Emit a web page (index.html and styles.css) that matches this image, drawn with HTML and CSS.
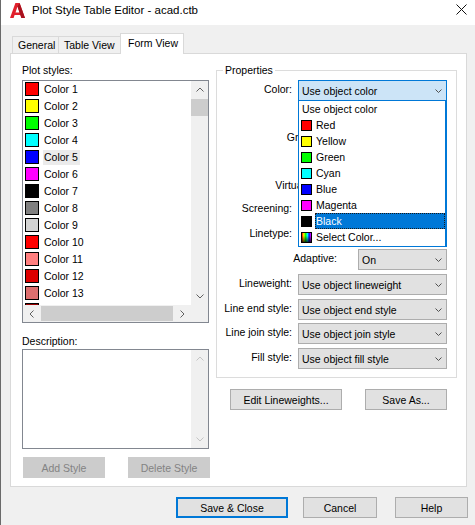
FILE: index.html
```html
<!DOCTYPE html>
<html>
<head>
<meta charset="utf-8">
<title>Plot Style Table Editor - acad.ctb</title>
<link rel="stylesheet" href="styles.css">
</head>
<body>
<div class="window">
  <div class="titlebar">
    <svg class="logo" width="15" height="15" viewBox="0 0 15 15">
      <path d="M0 15 L5.4 0 H9.6 L15 15 H11.4 L10.4 12 H4.6 L3.6 15 Z M5.5 9.4 H9.5 L7.5 3.6 Z" fill="#e1202c" fill-rule="evenodd"/>
      <path d="M9.6 0 L15 15 H11.4 L7.5 3.6 Z" fill="#a8121e"/>
    </svg>
    <span class="title">Plot Style Table Editor - acad.ctb</span>
    <svg class="close" width="11" height="11" viewBox="0 0 11 11">
      <path d="M0.5 0.5 L10.5 10.5 M10.5 0.5 L0.5 10.5" stroke="#111" stroke-width="1"/>
    </svg>
  </div>

  <div class="tabs">
    <div class="tab tab-general">General</div>
    <div class="tab tab-table">Table View</div>
    <div class="tab tab-form active">Form View</div>
  </div>

  <div class="panel">
    <div class="left">
      <div class="label">Plot styles:</div>
      <div class="listbox">
        <div class="items">
          <div class="item"><span class="sw" style="background:#ff0000"></span><span class="txt">Color 1</span></div>
          <div class="item"><span class="sw" style="background:#ffff00"></span><span class="txt">Color 2</span></div>
          <div class="item"><span class="sw" style="background:#00ff00"></span><span class="txt">Color 3</span></div>
          <div class="item"><span class="sw" style="background:#00ffff"></span><span class="txt">Color 4</span></div>
          <div class="item"><span class="sw" style="background:#0000ff"></span><span class="txt sel">Color 5</span></div>
          <div class="item"><span class="sw" style="background:#ff00ff"></span><span class="txt">Color 6</span></div>
          <div class="item"><span class="sw" style="background:#000000"></span><span class="txt">Color 7</span></div>
          <div class="item"><span class="sw" style="background:#808080"></span><span class="txt">Color 8</span></div>
          <div class="item"><span class="sw" style="background:#d3d3d3"></span><span class="txt">Color 9</span></div>
          <div class="item"><span class="sw" style="background:#ff0000"></span><span class="txt">Color 10</span></div>
          <div class="item"><span class="sw" style="background:#ff7f7f"></span><span class="txt">Color 11</span></div>
          <div class="item"><span class="sw" style="background:#dd0000"></span><span class="txt">Color 12</span></div>
          <div class="item"><span class="sw" style="background:#dd6f6f"></span><span class="txt">Color 13</span></div>
          <div class="item"><span class="sw" style="background:#990000"></span><span class="txt">Color 14</span></div>
        </div>
        <div class="vscroll">
          <div class="sbtn"><svg width="8" height="5" viewBox="0 0 8 5"><path d="M0.5 4.5 L4 1 L7.5 4.5" stroke="#606060" fill="none"/></svg></div>
          <div class="vthumb"></div>
          <div class="spacer"></div>
          <div class="sbtn"><svg width="8" height="5" viewBox="0 0 8 5"><path d="M0.5 0.5 L4 4 L7.5 0.5" stroke="#606060" fill="none"/></svg></div>
        </div>
        <div class="hscroll">
          <div class="sbtn"><svg width="5" height="8" viewBox="0 0 5 8"><path d="M4.5 0.5 L1 4 L4.5 7.5" stroke="#606060" fill="none"/></svg></div>
          <div class="htrack"><div class="hthumb"></div></div>
          <div class="sbtn"><svg width="5" height="8" viewBox="0 0 5 8"><path d="M0.5 0.5 L4 4 L0.5 7.5" stroke="#606060" fill="none"/></svg></div>
        </div>
        <div class="corner"></div>
      </div>

      <div class="label desc-label">Description:</div>
      <div class="textarea">
        <div class="tvscroll">
          <div class="sbtn"><svg width="8" height="5" viewBox="0 0 8 5"><path d="M0.5 4.5 L4 1 L7.5 4.5" stroke="#c4c4c4" fill="none"/></svg></div>
          <div class="spacer"></div>
          <div class="sbtn"><svg width="8" height="5" viewBox="0 0 8 5"><path d="M0.5 0.5 L4 4 L7.5 0.5" stroke="#c4c4c4" fill="none"/></svg></div>
        </div>
      </div>
      <div class="btnrow">
        <div class="btn disabled">Add Style</div>
        <div class="btn disabled">Delete Style</div>
      </div>
    </div>

    <div class="right">
      <fieldset class="props">
        <legend>Properties</legend>
        <div class="rows">
          <div class="row wide">
            <span class="plabel">Color:</span>
            <div class="combo-wrap">
              <div class="combo focus"><span>Use object color</span><svg class="chev" width="7" height="4" viewBox="0 0 7 4"><path d="M0.5 0.5 L3.5 3.5 L6.5 0.5" stroke="#505050" fill="none"/></svg></div>
              <div class="droplist">
                <div class="ditem"><span class="dtxt">Use object color</span></div>
                <div class="ditem"><span class="dsw" style="background:#ff0000"></span><span class="dtxt">Red</span></div>
                <div class="ditem"><span class="dsw" style="background:#ffff00"></span><span class="dtxt">Yellow</span></div>
                <div class="ditem"><span class="dsw" style="background:#00ff00"></span><span class="dtxt">Green</span></div>
                <div class="ditem"><span class="dsw" style="background:#00ffff"></span><span class="dtxt">Cyan</span></div>
                <div class="ditem"><span class="dsw" style="background:#0000ff"></span><span class="dtxt">Blue</span></div>
                <div class="ditem"><span class="dsw" style="background:#ff00ff"></span><span class="dtxt">Magenta</span></div>
                <div class="ditem"><span class="dsw" style="background:#000000"></span><span class="dtxt hl">Black</span></div>
                <div class="ditem"><span class="dsw rainbow"></span><span class="dtxt">Select Color...</span></div>
              </div>
            </div>
          </div>
          <div class="row hidden-row"></div>
          <div class="row narrow">
            <span class="plabel-clip"><span class="plabel">Grayscale:</span></span>
            <div class="combo"></div>
          </div>
          <div class="row hidden-row"></div>
          <div class="row narrow">
            <span class="plabel-clip"><span class="plabel">Virtual pen #:</span></span>
            <div class="combo"></div>
          </div>
          <div class="row wide">
            <span class="plabel">Screening:</span>
            <div class="combo"></div>
          </div>
          <div class="row wide">
            <span class="plabel">Linetype:</span>
            <div class="combo"></div>
          </div>
          <div class="row narrow">
            <span class="plabel">Adaptive:</span>
            <div class="combo"><span>On</span><svg class="chev" width="7" height="4" viewBox="0 0 7 4"><path d="M0.5 0.5 L3.5 3.5 L6.5 0.5" stroke="#505050" fill="none"/></svg></div>
          </div>
          <div class="row wide">
            <span class="plabel">Lineweight:</span>
            <div class="combo"><span>Use object lineweight</span><svg class="chev" width="7" height="4" viewBox="0 0 7 4"><path d="M0.5 0.5 L3.5 3.5 L6.5 0.5" stroke="#505050" fill="none"/></svg></div>
          </div>
          <div class="row wide">
            <span class="plabel">Line end style:</span>
            <div class="combo"><span>Use object end style</span><svg class="chev" width="7" height="4" viewBox="0 0 7 4"><path d="M0.5 0.5 L3.5 3.5 L6.5 0.5" stroke="#505050" fill="none"/></svg></div>
          </div>
          <div class="row wide">
            <span class="plabel">Line join style:</span>
            <div class="combo"><span>Use object join style</span><svg class="chev" width="7" height="4" viewBox="0 0 7 4"><path d="M0.5 0.5 L3.5 3.5 L6.5 0.5" stroke="#505050" fill="none"/></svg></div>
          </div>
          <div class="row wide">
            <span class="plabel">Fill style:</span>
            <div class="combo"><span>Use object fill style</span><svg class="chev" width="7" height="4" viewBox="0 0 7 4"><path d="M0.5 0.5 L3.5 3.5 L6.5 0.5" stroke="#505050" fill="none"/></svg></div>
          </div>
        </div>
      </fieldset>
      <div class="actions">
        <div class="btn btn-edit">Edit Lineweights...</div>
        <div class="btn btn-saveas">Save As...</div>
      </div>
    </div>
  </div>

  <div class="footer">
    <div class="btn btn-save default">Save &amp; Close</div>
    <div class="btn btn-cancel">Cancel</div>
    <div class="btn btn-help">Help</div>
  </div>
</div>
</body>
</html>
```

FILE: styles.css
```css
* { box-sizing: border-box; }
html, body { margin: 0; padding: 0; }
body {
  width: 475px;
  height: 525px;
  overflow: hidden;
  background: #f0f0f0;
  font-family: "Liberation Sans", Arial, sans-serif;
  font-size: 10.5px;
  color: #000;
}
.window {
  width: 475px;
  height: 525px;
  border-left: 1px solid #6a6a6a;
  display: flex;
  flex-direction: column;
}

/* title bar */
.titlebar {
  height: 25px;
  background: #fff;
  display: flex;
  align-items: flex-start;
  flex-shrink: 0;
}
.logo { margin: 3px 0 0 9px; flex-shrink: 0; }
.title { margin: 3px 0 0 7px; font-size: 11.5px; line-height: 14px; }
.close { margin: 4px 8px 0 auto; }

/* tabs */
.tabs {
  display: flex;
  align-items: flex-end;
  margin-top: 8px;
  padding-left: 11px;
  height: 20px;
  flex-shrink: 0;
}
.tab {
  height: 17px;
  border: 1px solid #d9d9d9;
  border-bottom: none;
  background: #f0f0f0;
  line-height: 16px;
  padding-left: 5px;
  white-space: nowrap;
}
.tab + .tab { margin-left: -1px; }
.tab-general { width: 47px; }
.tab-table { width: 63px; padding-left: 5px; }
.tab-form { width: 64px; }
.tab.active {
  height: 21px;
  margin-bottom: -1px;
  background: #fff;
  position: relative;
  z-index: 1;
  padding-left: 7px;
  line-height: 18px;
}

/* panel */
.panel {
  margin-left: 9px;
  width: 457px;
  height: 434px;
  background: #fff;
  border: 1px solid #d9d9d9;
  padding: 9px 0 0 11px;
  display: grid;
  grid-template-columns: 187px 241px;
  column-gap: 7px;
  align-items: start;
  flex-shrink: 0;
}

.label { height: 14px; line-height: 14px; }
.left { display: flex; flex-direction: column; }

.listbox {
  margin-top: 3px;
  height: 243px;
  border: 1px solid #828790;
  display: grid;
  grid-template-columns: 168px 17px;
  grid-template-rows: 224px 17px;
}
.items { overflow: hidden; }
.item {
  height: 17px;
  display: flex;
  align-items: flex-start;
  padding: 1px 0 0 2px;
}
.sw {
  width: 14px;
  height: 14px;
  border: 1px solid #000;
  flex-shrink: 0;
  margin-right: 4px;
}
.txt {
  height: 15px;
  line-height: 14px;
  padding: 0 2px 0 1px;
  white-space: nowrap;
}
.txt.sel { background: #ebebeb; }

.vscroll, .tvscroll {
  display: flex;
  flex-direction: column;
  background: #f0f0f0;
}
.sbtn {
  height: 17px;
  width: 17px;
  display: flex;
  align-items: center;
  justify-content: center;
  flex-shrink: 0;
}
.vthumb { height: 17px; margin-top: 1px; background: #cdcdcd; }
.spacer { flex: 1; }
.hscroll { display: flex; background: #f0f0f0; }
.htrack { flex: 1; padding: 1px; }
.hthumb { width: 132px; height: 15px; background: #cdcdcd; }
.corner { background: #f0f0f0; }

.desc-label { margin-top: 11px; }
.textarea {
  margin-top: 1px;
  height: 100px;
  border: 1px solid #828790;
  display: flex;
  justify-content: flex-end;
}
.tvscroll { width: 17px; }

.btnrow {
  margin-top: 8px;
  width: 188px;
  padding-left: 1px;
  display: flex;
  justify-content: space-between;
}

/* buttons */
.btn {
  height: 21px;
  border: 1px solid #adadad;
  background: #e1e1e1;
  display: flex;
  align-items: center;
  justify-content: center;
  white-space: nowrap;
}
.btnrow .btn { width: 82px; }
.btn.disabled { background: #cccccc; border-color: #cccccc; color: #838383; }

/* properties */
.props {
  margin: 0;
  padding: 3px 9px 8px 0;
  border: 1px solid #dcdcdc;
  min-width: 0;
  width: 241px;
}
.props legend {
  margin-left: 6px;
  padding: 0 2px;
  line-height: 14px;
  height: 14px;
}
.rows {
  display: grid;
  grid-template-rows: 24px 24px 24px 24px 23px 25px 25px 25px 25px 24px 25px 21px;
}
.row { display: flex; align-items: flex-start; }
.plabel {
  text-align: right;
  padding-top: 2px;
  line-height: 14px;
  white-space: nowrap;
  flex-shrink: 0;
}
.row.wide .plabel { width: 75px; margin-right: 6px; }
.row.wide .combo, .combo-wrap { width: 149px; }
.row.narrow .plabel { width: 120px; margin-right: 21px; }
.row.narrow .combo { width: 89px; }

/* labels whose right part lies under the open colour list */
.plabel-clip {
  width: 81px;
  margin-right: 60px;
  overflow: hidden;
  flex-shrink: 0;
}
.row.narrow .plabel-clip .plabel {
  display: block;
  width: 120px;
  margin-right: 0;
}

.combo-wrap { position: relative; }
.combo {
  height: 21px;
  border: 1px solid #adadad;
  background: #e1e1e1;
  display: flex;
  align-items: center;
  padding: 0 4px 0 3px;
  white-space: nowrap;
}
.combo .chev { margin-left: auto; flex-shrink: 0; }
.combo.focus { background: #cce4f7; border-color: #0078d7; }

.droplist {
  position: absolute;
  left: 0;
  top: 20px;
  width: 149px;
  height: 147px;
  background: #fff;
  border: 1px solid #0078d7;
  border-right-width: 2px;
  z-index: 5;
  padding: 0 0 1px 0;
}
.ditem {
  height: 16px;
  display: flex;
  align-items: center;
  padding-left: 2px;
}
.dsw {
  width: 11px;
  height: 11px;
  border: 1px solid #000;
  flex-shrink: 0;
  margin-right: 3px;
}
.dsw.rainbow {
  background:
    linear-gradient(to bottom, rgba(0,0,0,0) 30%, rgba(0,0,0,0.75)),
    linear-gradient(to right, #ff0000, #ffff00, #00ff00, #00ffff, #0000ff, #ff00ff);
}
.dtxt {
  height: 16px;
  line-height: 16px;
  padding-left: 1px;
  white-space: nowrap;
}
.dtxt.hl {
  flex: 1;
  background: #0078d7;
  color: #fff;
  outline: 1px dotted #1a1a1a;
  outline-offset: -1px;
}

.actions {
  margin-top: 11px;
  display: flex;
}
.btn-edit { margin-left: 14px; width: 112px; }
.btn-saveas { margin-left: 23px; width: 82px; }

/* footer */
.footer {
  margin-top: 10px;
  display: flex;
  justify-content: flex-end;
  padding-right: 7px;
}
.btn-save { width: 112px; }
.btn-save.default { border: 2px solid #0078d7; }
.btn-cancel { width: 74px; margin-left: 15px; }
.btn-help { width: 73px; margin-left: 18px; }
```
